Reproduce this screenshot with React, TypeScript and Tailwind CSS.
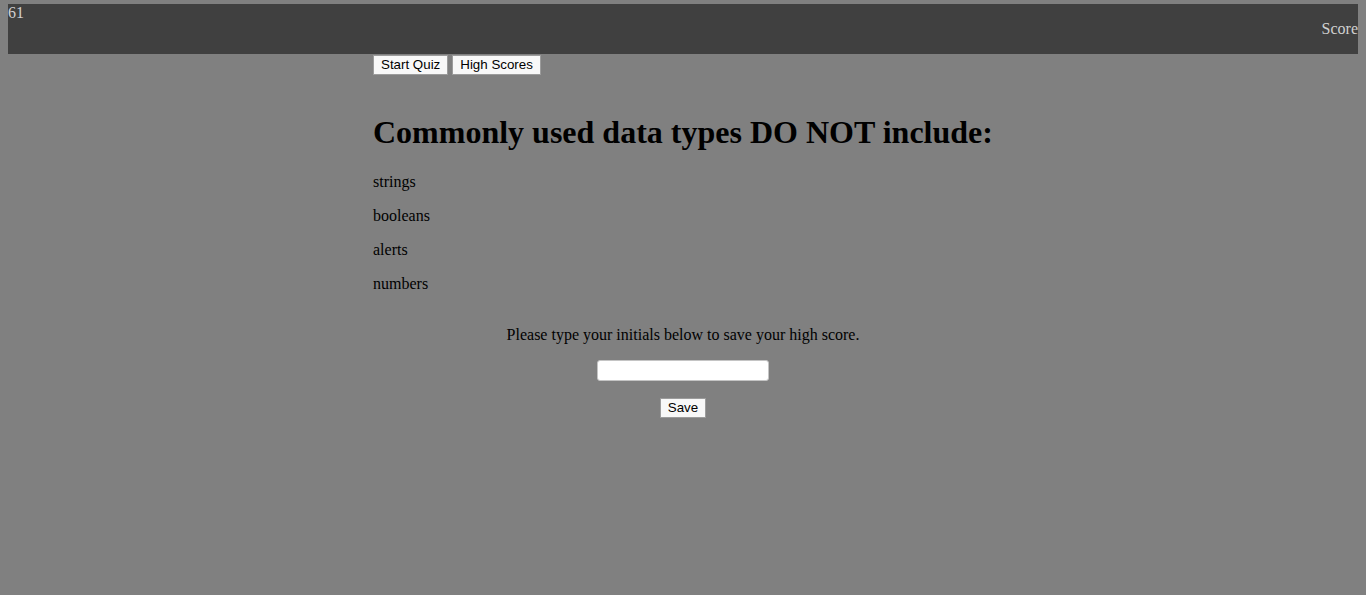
import React from 'react';

const answers = ['strings', 'booleans', 'alerts', 'numbers'];

const QuizButton: React.FC<{ label: string }> = ({ label }) => (
  <button className="h-[20px] px-[7px] bg-[#f8f8f8] border border-[#9c9c9c] text-[13.33px] leading-[16px] text-black font-['Arial','Liberation_Sans',sans-serif]">
    {label}
  </button>
);

export default function App() {
  return (
    <div className="min-h-screen bg-[#808080] pt-1 px-2 text-black font-['Liberation_Serif','Times_New_Roman',serif]">
      <header className="h-[50px] bg-[#404040] flex justify-between text-[#d0d0d0] text-[16px] leading-[18px]">
        <span>61</span>
        <span className="self-center">Score</span>
      </header>

      <main className="w-[620px] mx-auto">
        <div className="flex gap-[4px] mt-px">
          <QuizButton label="Start Quiz" />
          <QuizButton label="High Scores" />
        </div>

        <h1 className="mt-[39px] text-[32px] leading-[37px] font-bold">
          Commonly used data types DO NOT include:
        </h1>

        <div className="mt-[22px] flex flex-col gap-4 text-[16px] leading-[18px]">
          {answers.map((a) => (
            <p key={a}>{a}</p>
          ))}
        </div>

        <div className="flex flex-col items-center">
          <p className="mt-[33px] text-[16px] leading-[18px]">
            Please type your initials below to save your high score.
          </p>
          <input
            type="text"
            className="mt-[16px] w-[172px] h-[21px] bg-white border border-[#c4c4c4] rounded-[3px] outline-none"
          />
          <div className="mt-[17px] flex">
            <QuizButton label="Save" />
          </div>
        </div>
      </main>
    </div>
  );
}
